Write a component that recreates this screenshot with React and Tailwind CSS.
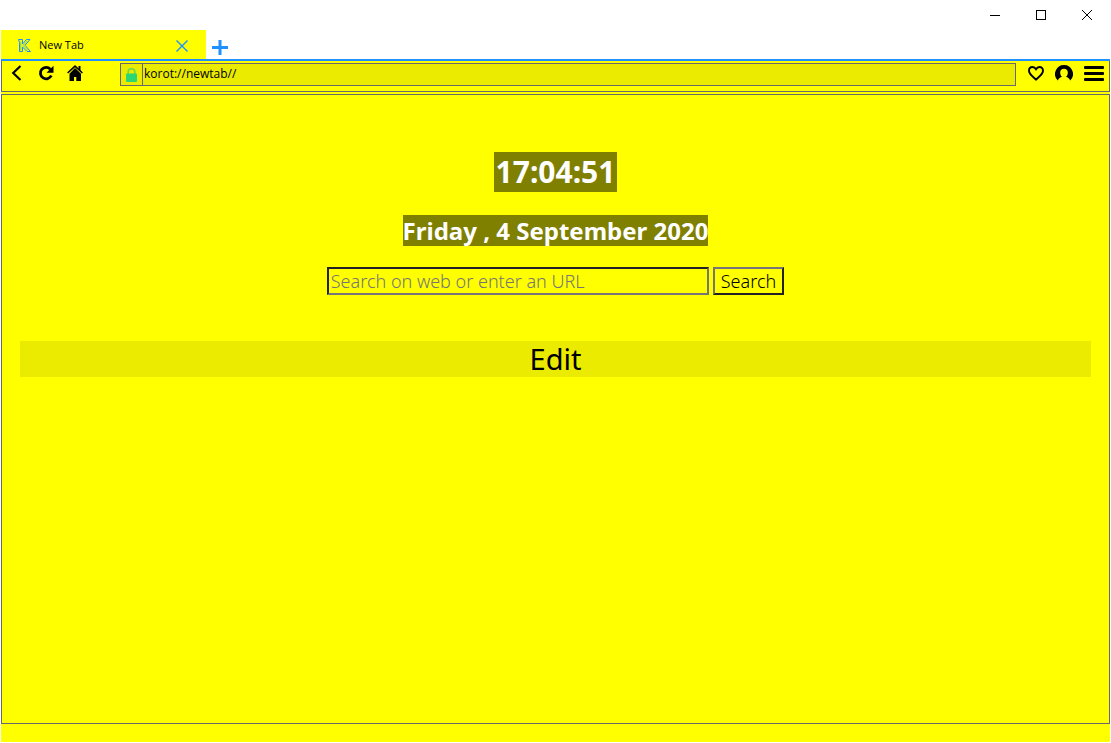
import React, { useState } from "react";

function KorotLogo() {
  return (
    <svg width="13" height="13" viewBox="0 0 13 13" fill="none" aria-hidden="true">
      <path d="M.5 .5H4.500V5L8.500 .5H12L7 6.300L12.500 12.500H9L4.500 8V12.500H1.500V3.500Z" stroke="#1e90ff" strokeWidth="1" />
      <path d="M2.800 2.500V11.500M5 6.500L9.500 1.800M5 6.500L10 11.500" stroke="#4fc0a0" strokeWidth=".8" />
    </svg>
  );
}

function BackIcon() {
  return (
    <svg width="16" height="16" viewBox="0 0 16 16" fill="none" aria-hidden="true">
      <path d="M11.500 1L4.200 8L11.500 15" stroke="#000" strokeWidth="2.200" />
    </svg>
  );
}

function ReloadIcon() {
  return (
    <svg width="16" height="16" viewBox="0 0 16 16" fill="none" aria-hidden="true">
      <path d="M12.300 4.200A5.700 5.700 0 1 0 13.300 10.500" stroke="#000" strokeWidth="2.800" />
      <path d="M15.500 .8V7.800H8.500Z" fill="#000" />
    </svg>
  );
}

function HomeIcon() {
  return (
    <svg width="16" height="16" viewBox="0 0 16 16" aria-hidden="true">
      <path d="M.6 8L8 1.200L15.400 8" fill="none" stroke="#000" strokeWidth="1.600" />
      <path d="M11.500 1H13.500V6.500L11.500 4.500Z" fill="#000" />
      <path d="M8 3L14 8.800V16H9.300V12H7V16H2.500V8.800Z" fill="#000" />
    </svg>
  );
}

function LockIcon() {
  return (
    <svg width="11" height="14" viewBox="0 0 11 14" aria-hidden="true">
      <path d="M2.200 7V4A3.300 3.200 0 0 1 8.800 4V7" fill="none" stroke="#6fd94a" strokeWidth="1.600" />
      <rect x="0" y="5.500" width="11" height="8.500" rx="1" fill="#2ed573" />
    </svg>
  );
}

function HeartIcon() {
  return (
    <svg width="16" height="15" viewBox="0 0 16 15" fill="none" aria-hidden="true">
      <path
        d="M8 13.600C5.500 11.200 1 8.300 1 4.700C1 2.500 2.600 1 4.500 1C6 1 7.200 1.800 8 3.200C8.800 1.800 10 1 11.500 1C13.400 1 15 2.500 15 4.700C15 8.300 10.500 11.200 8 13.600Z"
        stroke="#000"
        strokeWidth="1.900"
      />
    </svg>
  );
}

function ProfileIcon() {
  return (
    <svg width="18" height="16" viewBox="0 0 18 16" aria-hidden="true">
      <path
        d="M9 0A9 9 0 0 0 2.800 15.500C3.800 12.900 5.200 12.300 7 11.700C5.600 10.600 5.200 9 5.200 7.400C5.200 5 6.800 3.800 9 3.800C11.200 3.800 12.800 5 12.800 7.400C12.800 9 12.400 10.600 11 11.700C12.800 12.300 14.200 12.900 15.200 15.500A9 9 0 0 0 9 0Z"
        fill="#000"
      />
    </svg>
  );
}

function MenuIcon() {
  return (
    <svg width="20" height="15" viewBox="0 0 20 15" aria-hidden="true">
      <rect x="0" y="0" width="20" height="3" rx="1" />
      <rect x="0" y="6" width="20" height="3" rx="1" />
      <rect x="0" y="12" width="20" height="3" rx="1" />
    </svg>
  );
}

function TitleBar() {
  return (
    <header className="flex h-[30px] shrink-0 justify-end">
      <button aria-label="Minimize" className="flex w-[46px] items-center justify-center">
        <svg width="10" height="10" viewBox="0 0 10 10"><path d="M0 5.500H10" stroke="#000" /></svg>
      </button>
      <button aria-label="Maximize" className="flex w-[46px] items-center justify-center">
        <svg width="10" height="10" viewBox="0 0 10 10"><rect x=".5" y=".5" width="9" height="9" fill="none" stroke="#000" /></svg>
      </button>
      <button aria-label="Close" className="flex w-[46px] items-center justify-center">
        <svg width="10" height="10" viewBox="0 0 10 10"><path d="M0 0L10 10M10 0L0 10" stroke="#000" /></svg>
      </button>
    </header>
  );
}

function TabStrip() {
  return (
    <div className="flex shrink-0 items-stretch border-b-2 border-[#1e90ff]">
      <div className="flex h-[29px] w-[205px] items-center bg-[#ffff00] pt-0.5 pr-[18px] pl-[17px]">
        <KorotLogo />
        <span className="ml-2 flex-1 text-[11px]">New Tab</span>
        <button aria-label="Close tab">
          <svg width="12" height="12" viewBox="0 0 12 12">
            <path d="M.5 .5L11.500 11.500M11.500 .5L.5 11.500" stroke="#1e90ff" strokeWidth="1.400" />
          </svg>
        </button>
      </div>
      <button aria-label="New tab" className="flex w-7 items-center justify-center pt-1.5">
        <svg width="16" height="16" viewBox="0 0 16 16">
          <path d="M8 0V15M0 7.500H16" stroke="#1e90ff" strokeWidth="3" />
        </svg>
      </button>
    </div>
  );
}

function Toolbar() {
  const [address, setAddress] = useState("korot://newtab//");
  return (
    <nav className="flex h-[31px] shrink-0 items-start border-x border-b border-[#696969] bg-[#ffff00] pt-0.5 pr-[5px]">
      <div className="flex h-5 w-[118px] items-center gap-[13px] pl-[7px]">
        <button aria-label="Back"><BackIcon /></button>
        <button aria-label="Reload"><ReloadIcon /></button>
        <button aria-label="Home"><HomeIcon /></button>
      </div>
      <div className="flex h-[23px] flex-1 border border-[#696969] bg-[#ebeb00]">
        <button aria-label="Site information" className="flex w-[22px] items-center justify-center border-r border-[#696969]">
          <LockIcon />
        </button>
        <input
          aria-label="Address"
          value={address}
          onChange={(e) => setAddress(e.target.value)}
          className="h-[19px] min-w-0 flex-1 bg-transparent px-px text-xs outline-none"
        />
      </div>
      <div className="ml-3 flex h-5 items-center gap-[11px]">
        <button aria-label="Favorites"><HeartIcon /></button>
        <button aria-label="Profile"><ProfileIcon /></button>
        <button aria-label="Menu"><MenuIcon /></button>
      </div>
    </nav>
  );
}

function NewTabPage() {
  return (
    <main className="flex flex-1 flex-col items-center border border-[#696969] px-[18px] pt-[57px] font-['Noto_Sans',sans-serif]">
      <h1 className="bg-[#808000] px-0.5 text-[30px] leading-10 font-bold text-white">17:04:51</h1>
      <h2 className="mt-[23px] bg-[#808000] text-2xl leading-[31px] font-bold text-white">
        Friday , 4 September 2020
      </h2>
      <form className="mt-[21px] flex gap-1 text-lg font-light" onSubmit={(e) => e.preventDefault()}>
        <input
          type="text"
          aria-label="Search on web or enter an URL"
          placeholder="Search on web or enter an URL"
          className="h-7 w-[382px] border-2 border-t-[#222222] border-r-[#767676] border-b-[#767676] border-l-[#222222] px-0.5 placeholder:text-[#757575]"
        />
        <button className="h-7 border-2 border-t-[#767676] border-r-[#222222] border-b-[#222222] border-l-[#767676] px-1.5 leading-6">
          Search
        </button>
      </form>
      <button className="mt-[46px] w-full bg-[#ebeb00] text-[29px] leading-9">Edit</button>
    </main>
  );
}

export default function App() {
  return (
    <div className="flex min-h-screen flex-col bg-white px-px pb-px font-['Open_Sans',sans-serif] text-black">
      <TitleBar />
      <TabStrip />
      <Toolbar />
      <div className="flex flex-1 flex-col bg-[#ffff00] pt-0.5 pb-[18px]">
        <NewTabPage />
      </div>
    </div>
  );
}
